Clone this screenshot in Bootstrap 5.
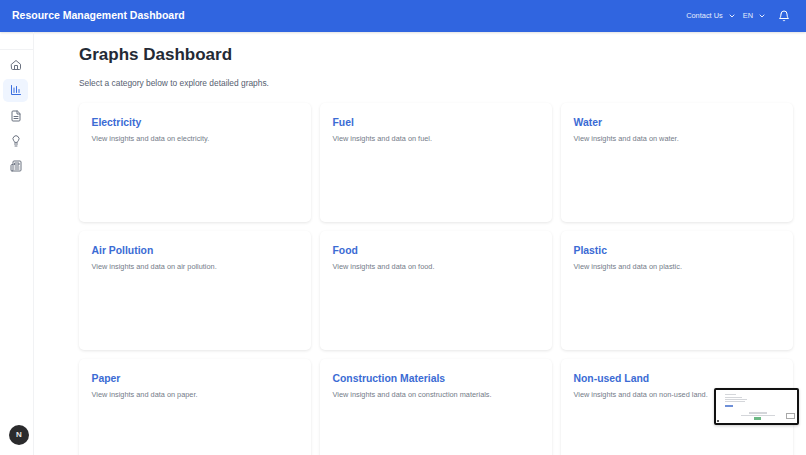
<!DOCTYPE html>
<html lang="en">
<head>
    <meta charset="UTF-8">
    <meta name="viewport" content="width=device-width, initial-scale=1.0">
    <title>Resource Management Dashboard</title>
    <link href="https://cdn.jsdelivr.net/npm/bootstrap@5.3.2/dist/css/bootstrap.min.css" rel="stylesheet">
    <style>
        html, body { height: 100%; overflow: hidden; }
        body { font-family: "Liberation Sans", Arial, sans-serif; color: #212833; background: #fff; }
        .top-bar { height: 32px; background: #3065e0; padding: 0 16px 0 12px; box-shadow: 0 1px 2px rgba(0,0,0,.12); }
        .top-title { font-size: 10.5px; font-weight: 700; color: #fff; }
        .top-link { font-size: 7.4px; color: #e6edfc; }
        .top-link svg { margin-left: 6px; }
        .link-gap { margin-right: 8px; }
        .bell-gap { margin-right: 13px; }
        .side-bar { width: 34px; flex: none; border-right: 1px solid #f1f2f4; padding-top: 17px; }
        .side-rule { border-top: 1px solid #f1f2f4; height: 4.500px; }
        .side-item { width: 25px; height: 23px; margin: 0 0 2.300px 3px; border-radius: 5px; color: #6b7280; }
        .side-item.is-active { background: #eff5ff; color: #3b6fe0; }
        .next-badge { width: 20px; height: 20px; left: 9px; bottom: 10px; background: #2b2b2d; color: #e8e8e8; font-size: 8px; font-weight: 700; }
        .main-area { padding: 14px 13px 0 45px; overflow: hidden; }
        .page-title { font-size: 17px; font-weight: 700; line-height: 17px; margin: 0 0 15px; color: #242a35; }
        .page-sub { font-size: 8.400px; line-height: 11px; color: #566070; margin: 0 0 14px; }
        .cat-grid { display: grid; grid-template-columns: repeat(3, 232px); grid-auto-rows: 119.100px; gap: 9px; }
        .cat-card { border: 0; border-radius: 5px; padding: 13px 12.500px; box-shadow: 0 1px 3px rgba(0,0,0,.1); }
        .cat-name { font-size: 10.400px; font-weight: 700; line-height: 13px; color: #3b6bd4; margin: 0 0 5px; }
        .cat-text { font-size: 7.350px; line-height: 10px; color: #747c89; margin: 0; }
        .preview-box { width: 85px; height: 37px; right: 7px; top: 388px; border: 2px solid #111; border-radius: 2px; background: #fff; overflow: hidden; box-shadow: 0 1px 3px rgba(0,0,0,.2); }
        .preview-box span { position: absolute; display: block; }
        .bg-soft-line { background: #d4d6da; }
    </style>
</head>
<body>
    <nav class="top-bar d-flex align-items-center justify-content-between">
        <span class="top-title">Resource Management Dashboard</span>
        <div class="d-flex align-items-center">
            <span class="top-link d-flex align-items-center link-gap">Contact Us
                <svg width="6" height="4" viewBox="0 0 6 4" fill="none" stroke="#e6edfc" stroke-width="1"><path d="M.7.7 3 3 5.300.7"/></svg>
            </span>
            <span class="top-link d-flex align-items-center bell-gap">EN
                <svg width="6" height="4" viewBox="0 0 6 4" fill="none" stroke="#e6edfc" stroke-width="1"><path d="M.7.7 3 3 5.300.7"/></svg>
            </span>
            <svg width="12" height="12" viewBox="0 0 24 24" fill="none" stroke="#fff" stroke-width="2" stroke-linecap="round" stroke-linejoin="round"><path d="M6 8a6 6 0 0 1 12 0c0 7 3 9 3 9H3s3-2 3-9"/><path d="M10.300 21a2 2 0 0 0 3.400 0"/></svg>
        </div>
    </nav>

    <div class="d-flex position-relative" style="height: 423px">
        <aside class="side-bar">
            <div class="side-rule"></div>
            <div class="side-item d-flex align-items-center justify-content-center">
                <svg width="12" height="12" viewBox="0 0 24 24" fill="none" stroke="currentColor" stroke-width="2" stroke-linecap="round" stroke-linejoin="round"><path d="M3 10.500 12 3l9 7.500V19a2 2 0 0 1-2 2H5a2 2 0 0 1-2-2z"/><path d="M9 21v-8h6v8"/></svg>
            </div>
            <div class="side-item is-active d-flex align-items-center justify-content-center">
                <svg width="12" height="12" viewBox="0 0 24 24" fill="none" stroke="currentColor" stroke-width="2" stroke-linecap="round"><path d="M3 3v18h18"/><path d="M8 17V8"/><path d="M13 17V5"/><path d="M18 17v-6"/></svg>
            </div>
            <div class="side-item d-flex align-items-center justify-content-center">
                <svg width="12" height="12" viewBox="0 0 24 24" fill="none" stroke="currentColor" stroke-width="2" stroke-linecap="round" stroke-linejoin="round"><path d="M14 2H6a2 2 0 0 0-2 2v16a2 2 0 0 0 2 2h12a2 2 0 0 0 2-2V8z"/><path d="M14 2v6h6"/><path d="M8 13h8"/><path d="M8 17h8"/></svg>
            </div>
            <div class="side-item d-flex align-items-center justify-content-center">
                <svg width="12" height="12" viewBox="0 0 24 24" fill="none" stroke="currentColor" stroke-width="2" stroke-linecap="round" stroke-linejoin="round"><path d="M15 14c.2-1 .7-1.700 1.500-2.500A6 6 0 1 0 7.500 11.500c.8.8 1.300 1.500 1.500 2.500z"/><path d="M9 18h6"/><path d="M10 22h4"/></svg>
            </div>
            <div class="side-item d-flex align-items-center justify-content-center">
                <svg width="12" height="12" viewBox="0 0 24 24" fill="none" stroke="currentColor" stroke-width="2" stroke-linecap="round" stroke-linejoin="round"><path d="M4 22h16a2 2 0 0 0 2-2V4a2 2 0 0 0-2-2H8a2 2 0 0 0-2 2v16a2 2 0 0 1-4 0V11c0-1.100.9-2 2-2h2"/><path d="M10 6h8v4h-8z"/><path d="M10 14h8"/><path d="M10 18h8"/></svg>
            </div>
        </aside>
        <div class="next-badge position-absolute rounded-circle d-flex align-items-center justify-content-center">N</div>

        <main class="main-area flex-grow-1">
            <h1 class="page-title">Graphs Dashboard</h1>
            <p class="page-sub">Select a category below to explore detailed graphs.</p>
            <div class="cat-grid">
                <div class="card cat-card"><h5 class="cat-name">Electricity</h5><p class="cat-text">View insights and data on electricity.</p></div>
                <div class="card cat-card"><h5 class="cat-name">Fuel</h5><p class="cat-text">View insights and data on fuel.</p></div>
                <div class="card cat-card"><h5 class="cat-name">Water</h5><p class="cat-text">View insights and data on water.</p></div>
                <div class="card cat-card"><h5 class="cat-name">Air Pollution</h5><p class="cat-text">View insights and data on air pollution.</p></div>
                <div class="card cat-card"><h5 class="cat-name">Food</h5><p class="cat-text">View insights and data on food.</p></div>
                <div class="card cat-card"><h5 class="cat-name">Plastic</h5><p class="cat-text">View insights and data on plastic.</p></div>
                <div class="card cat-card"><h5 class="cat-name">Paper</h5><p class="cat-text">View insights and data on paper.</p></div>
                <div class="card cat-card"><h5 class="cat-name">Construction Materials</h5><p class="cat-text">View insights and data on construction materials.</p></div>
                <div class="card cat-card"><h5 class="cat-name">Non-used Land</h5><p class="cat-text">View insights and data on non-used land.</p></div>
            </div>
        </main>
    </div>

    <div class="preview-box position-fixed">
        <span class="bg-soft-line" style="left:9px;top:4px;width:11px;height:1px"></span>
        <span class="bg-soft-line" style="left:9px;top:7px;width:17px;height:1px"></span>
        <span class="bg-soft-line" style="left:9px;top:9px;width:22px;height:1px"></span>
        <span class="bg-soft-line" style="left:9px;top:11px;width:20px;height:1px"></span>
        <span style="left:9px;top:15px;width:8px;height:2px;background:#6f90d8"></span>
        <span class="bg-soft-line" style="left:33px;top:22px;width:18px;height:2px"></span>
        <span class="bg-soft-line" style="left:25px;top:25px;width:34px;height:1px"></span>
        <span style="left:38px;top:27px;width:7px;height:3px;background:#6cb985"></span>
        <span style="right:2px;top:23px;width:9px;height:6px;border:1px solid #a8a8a8"></span>
        <span style="left:1px;bottom:1px;width:2px;height:2px;background:#222;border-radius:50%"></span>
    </div>

    <script src="https://cdn.jsdelivr.net/npm/bootstrap@5.3.2/dist/js/bootstrap.bundle.min.js"></script>
</body>
</html>
